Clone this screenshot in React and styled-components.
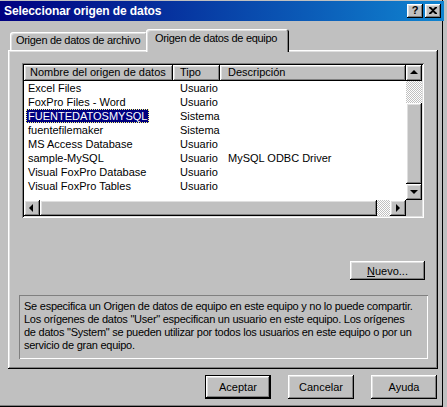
import React from 'react'
import styled, { createGlobalStyle, css } from 'styled-components'

const GlobalStyle = createGlobalStyle`
  html, body {
    margin: 0;
    padding: 0;
    background: #c0c0c0;
  }
  * { box-sizing: border-box; }
`

const raised = css`
  box-shadow: inset -1px -1px #000, inset 1px 1px #fff, inset -2px -2px #808080, inset 2px 2px #dfdfdf;
`

const dither = css`
  background: repeating-conic-gradient(#c0c0c0 0 25%, #fff 0 50%) 0 0 / 2px 2px;
`

const Window = styled.div`
  width: 447px;
  height: 407px;
  background: #c0c0c0;
  padding-top: 1px;
  font-family: "Liberation Sans", Arial, sans-serif;
  font-size: 11px;
  color: #000;
  display: flex;
  flex-direction: column;
  overflow: hidden;
  box-shadow: inset -4px 0 #c0c0c0, inset -5px 0 #000, inset 0 -1px #000, inset 0 -2px #808080;
`

const TitleBar = styled.div`
  height: 20px;
  margin-right: 3px;
  background: linear-gradient(90deg, #000080, #1084d0);
  display: flex;
  align-items: center;
  padding: 0 3px 0 4px;
`

const Title = styled.div`
  flex: 1;
  color: #fff;
  font-weight: bold;
  font-size: 12px;
  letter-spacing: -0.1px;
`

const TitleButton = styled.div`
  width: 16px;
  height: 14px;
  margin-left: 2px;
  background: #c0c0c0;
  ${raised}
  display: flex;
  align-items: center;
  justify-content: center;
  font-weight: bold;
  font-size: 11px;
  line-height: 1;
  padding-bottom: 1px;
`

const Body = styled.div`
  padding: 8px 0 0 8px;
`

const TabRow = styled.div`
  display: flex;
  align-items: flex-end;
  height: 21px;
  padding-left: 2px;
  position: relative;
  z-index: 1;
`

const Tab = styled.div`
  height: ${p => (p.$active ? 23 : 18)}px;
  margin: ${p => (p.$active ? '0 -2px -2px -2px' : '0')};
  padding: ${p => (p.$active ? '3px 0 0 9px' : '2px 0 0 6px')};
  background: #c0c0c0;
  border-radius: 3px 3px 0 0;
  box-shadow: inset 1px 1px #fff, inset -1px 0 #000, inset -2px 0 #808080, inset 2px 2px #dfdfdf;
  white-space: nowrap;
  overflow: hidden;
  letter-spacing: -0.3px;
  width: ${p => p.$w}px;
`

const Panel = styled.div`
  width: 430px;
  height: 319px;
  background: #c0c0c0;
  ${raised}
  padding: 13px 0 0 14px;
  display: flex;
  flex-direction: column;
`

const ListView = styled.div`
  width: 402px;
  height: 155px;
  background: #fff;
  padding: 2px;
  box-shadow: inset 1px 1px #808080, inset -1px -1px #fff, inset 2px 2px #000, inset -2px -2px #dfdfdf;
  display: grid;
  grid-template-columns: 382px 16px;
  grid-template-rows: 135px 16px;
`

const ListMain = styled.div`
  display: flex;
  flex-direction: column;
  overflow: hidden;
`

const HeaderRow = styled.div`
  display: flex;
  height: 16px;
  flex-shrink: 0;
`

const HeaderCell = styled.div`
  width: ${p => p.$w}px;
  flex-shrink: 0;
  height: 16px;
  background: #c0c0c0;
  ${raised}
  padding: 1px 0 0 ${p => p.$pl}px;
  white-space: nowrap;
  overflow: hidden;
`

const Rows = styled.div`
  display: flex;
  flex-direction: column;
`

const Row = styled.div`
  display: flex;
  height: 14px;
  line-height: 14px;
  white-space: nowrap;
`

const Cell = styled.div`
  width: ${p => p.$w}px;
  flex-shrink: 0;
  padding-left: ${p => p.$pl}px;
`

const Selected = styled.span`
  display: inline-block;
  background: #000080;
  color: #fff;
  outline: 1px dotted #ffff80;
  outline-offset: -1px;
  padding: 0 2px;
  margin-left: -2px;
  height: 14px;
`

const VScroll = styled.div`
  display: flex;
  flex-direction: column;
`

const HScroll = styled.div`
  display: flex;
`

const ArrowBtn = styled.div`
  width: 16px;
  height: 16px;
  flex-shrink: 0;
  background: #c0c0c0;
  ${raised}
  display: flex;
  align-items: center;
  justify-content: center;
`

const Track = styled.div`
  ${dither}
  flex: ${p => (p.$grow ? 1 : 'none')};
  ${p => p.$w && `width: ${p.$w}px;`}
  ${p => p.$h && `height: ${p.$h}px;`}
`

const Thumb = styled.div`
  background: #c0c0c0;
  ${raised}
  flex: ${p => (p.$grow ? 1 : 'none')};
  ${p => p.$w && `width: ${p.$w}px;`}
`

const Corner = styled.div`
  background: #c0c0c0;
`

const ButtonRow = styled.div`
  display: flex;
  justify-content: flex-end;
  padding-right: ${p => p.$pr}px;
  margin-top: ${p => p.$mt}px;
  gap: ${p => p.$gap || 0}px;
`

const Button = styled.div`
  width: ${p => p.$w}px;
  height: ${p => p.$h}px;
  background: #c0c0c0;
  ${p => p.$default
    ? css`box-shadow: inset 0 0 0 1px #000, inset -2px -2px #000, inset 2px 2px #fff, inset -3px -3px #808080, inset 3px 3px #dfdfdf;`
    : raised}
  display: flex;
  align-items: center;
  justify-content: center;
  font-size: 11px;
  u { text-decoration: underline; }
`

const Description = styled.div`
  width: 409px;
  height: 64px;
  margin-top: 15px;
  margin-left: -3px;
  box-shadow: inset 1px 1px #808080, inset -1px -1px #fff;
  padding: 5px 4px 0 5px;
  line-height: 13px;
  white-space: nowrap;
  letter-spacing: -0.25px;
`

const Arrow = ({ dir }) => {
  const pts = {
    up: '4,6 8,2 12,6',
    down: '4,5 12,5 8,9',
    left: '9,4 5,8 9,12',
    right: '6,4 10,8 6,12',
  }[dir]
  return (
    <svg width="16" height="16" viewBox="0 0 16 16" style={{ margin: -1 }}>
      <polygon points={pts} fill="#000" transform={dir === 'up' ? 'translate(0,3)' : dir === 'down' ? 'translate(0,1)' : ''} />
    </svg>
  )
}

const rows = [
  ['Excel Files', 'Usuario', ''],
  ['FoxPro Files - Word', 'Usuario', ''],
  ['FUENTEDATOSMYSQL', 'Sistema', '', true],
  ['fuentefilemaker', 'Sistema', ''],
  ['MS Access Database', 'Usuario', ''],
  ['sample-MySQL', 'Usuario', 'MySQL ODBC Driver'],
  ['Visual FoxPro Database', 'Usuario', ''],
  ['Visual FoxPro Tables', 'Usuario', ''],
]

export default function App() {
  return (
    <>
      <GlobalStyle />
      <Window>
        <TitleBar>
          <Title>Seleccionar origen de datos</Title>
          <TitleButton>?</TitleButton>
          <TitleButton>
            <svg width="8" height="7" viewBox="0 0 8 7">
              <path d="M0 0h2l2 2 2-2h2v1L5 3.5 8 6v1H6L4 5 2 7H0V6l3-2.5L0 1z" fill="#000" />
            </svg>
          </TitleButton>
        </TitleBar>
        <Body>
          <TabRow>
            <Tab $w={138}>Origen de datos de archivo</Tab>
            <Tab $w={143} $active>Origen de datos de equipo</Tab>
          </TabRow>
          <Panel>
            <ListView>
              <ListMain>
                <HeaderRow>
                  <HeaderCell $w={149} $pl={6}>Nombre del origen de datos</HeaderCell>
                  <HeaderCell $w={47} $pl={7}>Tipo</HeaderCell>
                  <HeaderCell $w={186} $pl={8}>Descripción</HeaderCell>
                </HeaderRow>
                <Rows>
                  {rows.map(([name, type, desc, sel]) => (
                    <Row key={name}>
                      <Cell $w={156} $pl={4}>{sel ? <Selected>{name}</Selected> : name}</Cell>
                      <Cell $w={48} $pl={0}>{type}</Cell>
                      <Cell $w={178} $pl={0}>{desc}</Cell>
                    </Row>
                  ))}
                </Rows>
              </ListMain>
              <VScroll>
                <ArrowBtn><Arrow dir="up" /></ArrowBtn>
                <Track $h={22} />
                <Thumb $grow />
                <ArrowBtn><Arrow dir="down" /></ArrowBtn>
              </VScroll>
              <HScroll>
                <ArrowBtn><Arrow dir="left" /></ArrowBtn>
                <Thumb $w={337} />
                <Track $grow />
                <ArrowBtn><Arrow dir="right" /></ArrowBtn>
              </HScroll>
              <Corner />
            </ListView>
            <ButtonRow $pr={13} $mt={43}>
              <Button $w={75} $h={19}><span><u>N</u>uevo...</span></Button>
            </ButtonRow>
            <Description>
              Se especifica un Origen de datos de equipo en este equipo y no lo puede compartir.<br />
              Los orígenes de datos "User" especifican un usuario en este equipo. Los orígenes<br />
              de datos "System" se pueden utilizar por todos los usuarios en este equipo o por un<br />
              servicio de gran equipo.
            </Description>
          </Panel>
          <ButtonRow $pr={10} $mt={6} $gap={17}>
            <Button $w={66} $h={24} $default>Aceptar</Button>
            <Button $w={66} $h={24}>Cancelar</Button>
            <Button $w={66} $h={24}>Ayuda</Button>
          </ButtonRow>
        </Body>
      </Window>
    </>
  )
}
